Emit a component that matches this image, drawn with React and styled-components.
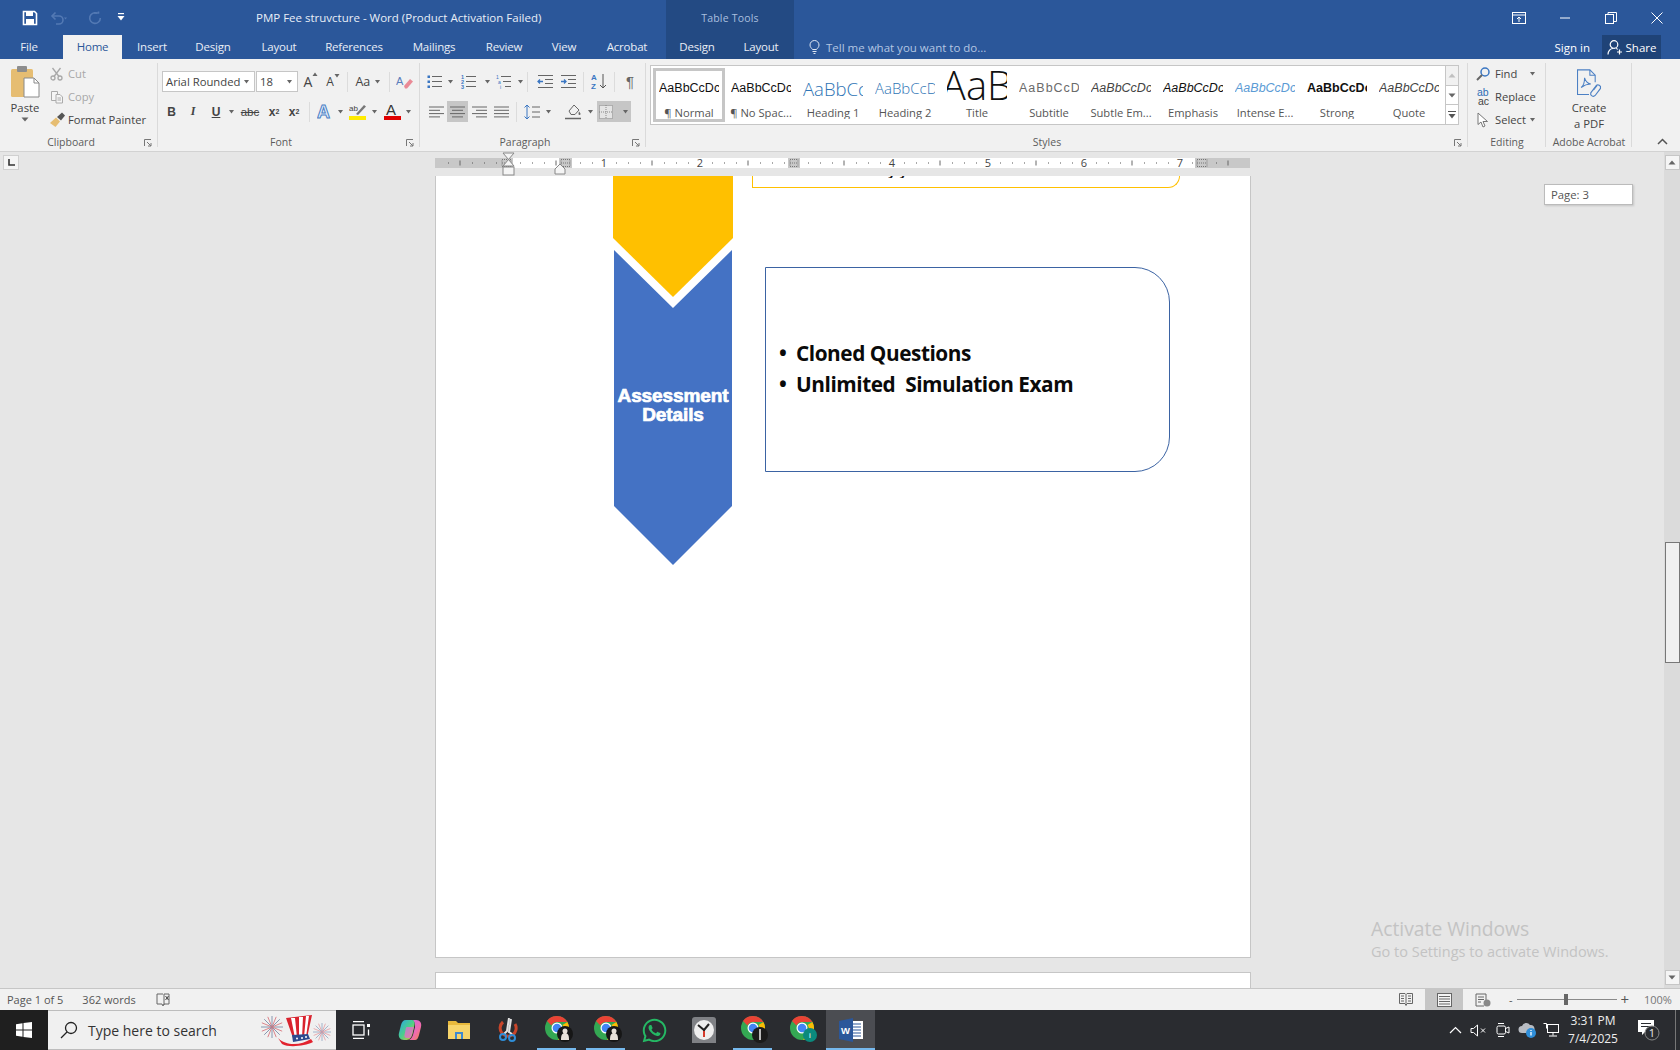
import React from "react";
import styled, { createGlobalStyle } from "styled-components";
import { FaWhatsapp } from "react-icons/fa";

const UI = `"Open Sans", "Noto Sans", sans-serif`;

const Global = createGlobalStyle`
  html, body { margin: 0; padding: 0; height: 100%; overflow: hidden; background: #e6e6e6; }
  #root { height: 100%; }
  * { box-sizing: border-box; }
`;

const Shell = styled.div`
  width: 1680px; height: 1050px; display: flex; flex-direction: column;
  font-family: ${UI}; overflow: hidden; color: #444;
`;

/* ---------- title bar ---------- */
const TitleRow = styled.div`display: flex; height: 35px; background: #2b579a; color: #fff;`;
const TabRow = styled.div`display: flex; height: 24px; background: #2b579a; color: #fff;`;
const Qat = styled.div`width: 256px; display: flex; align-items: center; padding-left: 22px;`;
const QatSlot = styled.span`width: ${p => p.$w}px; display: flex; align-items: center;`;
const WindowTitle = styled.div`width: 410px; font-size: 11.5px; line-height: 35px; white-space: nowrap; color: #e8eef7;`;
const TableBand = styled.div`
  width: 128px; background: #234a83; display: flex; align-items: center; justify-content: center;
  font-size: 10.5px; letter-spacing: .2px; color: #a9bfdf;
`;
const WindowControls = styled.div`margin-left: auto; display: flex; align-items: center;`;
const WinBtn = styled.span`width: 46px; display: flex; justify-content: center;`;

const Tab = styled.div`
  width: ${p => p.$w}px; margin-right: ${p => p.$mr || 0}px; font-size: 11.5px; letter-spacing: -0.2px; line-height: 24px; text-align: center;
  background: ${p => (p.$active ? "#f1f1f1" : "transparent")};
  color: ${p => (p.$active ? "#2b579a" : "#e9eef6")};
`;
const BandTabs = styled.div`width: 128px; background: #234a83; display: flex; margin-left: 6px;`;
const TellMe = styled.div`
  display: flex; align-items: center; gap: 6px; margin-left: 15px; font-size: 11.5px; color: #b4c6e2;
`;
const AccountArea = styled.div`margin-left: auto; display: flex; align-items: center; padding-right: 19px;`;
const SignIn = styled.span`font-size: 11.5px; margin-right: 12px;`;
const Share = styled.div`
  width: 59px; height: 24px; background: #1f4377; display: flex; align-items: center; justify-content: center; gap: 3px; font-size: 11.5px;
`;

/* ---------- ribbon ---------- */
const Ribbon = styled.div`
  display: flex; height: 93px; background: #f1f1f1; border-bottom: 1px solid #d2d2d2; position: relative;
`;
const Group = styled.div`
  width: ${p => p.$w}px; position: relative; display: flex; flex-direction: column;
  &::after { content: ""; position: absolute; right: 0; top: 4px; bottom: 4px; width: 1px; background: #dadada; }
`;
const GroupBody = styled.div`
  flex: 1; display: ${p => (p.$col ? "flex" : "block")}; padding: ${p => p.$pad || "12px 0 0 4px"}; min-height: 0;
`;
const GroupLabel = styled.div`
  height: 19px; text-align: center; font-size: 10.5px; color: #5c5c5c; line-height: 21px; white-space: nowrap; padding-right: ${p => p.$pr || 0}px;
`;
const Launcher = styled.span`position: absolute; right: 6px; bottom: 4px; width: 8px; height: 8px; display: flex;`;
const ToolRow = styled.div`display: flex; align-items: center; height: 21px; margin-bottom: 9px;`;
const Tool = styled.span`
  width: ${p => p.$w || 22}px; height: 21px; flex: none; display: flex; align-items: center; justify-content: center;
  margin-left: ${p => p.$ml || 0}px;
  background: ${p => (p.$on ? "#c6c6c6" : "transparent")};
  font: ${p => p.$font || `11.5px ${UI}`}; color: ${p => p.$color || "#444"};
`;
const Sep = styled.span`width: 1px; height: 20px; background: #dcdcdc; flex: none; margin: 0 ${p => p.$m || 3}px;`;
const Caret = () => <svg width="7" height="4" viewBox="0 0 7 4"><path d="M1 0h5L3.500 3.500z" fill="#666"/></svg>;
const ComboBox = styled.div`
  width: ${p => p.$w}px; height: 21px; margin-right: 1px; background: #fff; border: 1px solid #c6c6c6; flex: none;
  display: flex; align-items: center; justify-content: space-between; padding: 0 4px 0 3px; font-size: 11.3px; color: #444;
`;
const ClipCol = styled.div`width: 48px; display: flex; flex-direction: column; align-items: center; padding-top: 6px; font-size: 11.3px;`;
const ClipLabel = styled.div`margin-top: 1px; margin-bottom: 2px; line-height: 15px; color: #444;`;
const ClipList = styled.div`display: flex; flex-direction: column; padding: 3px 0 0 1px;`;
const ClipItem = styled.div`
  display: flex; align-items: center; gap: ${p => p.$gap || 4}px; height: 23px; font-size: 11.2px; white-space: nowrap;
  color: ${p => (p.$off ? "#a8a8a8" : "#444")};
`;

/* styles gallery */
const StylesBody = styled.div`flex: 1; display: flex; padding: 6px 0 0 4px; min-height: 0;`;
const Gallery = styled.div`
  width: 795px; height: 60px; background: #fff; border: 1px solid #c6c6c6; border-right: 0; padding: 2px 0 0 2px; display: flex;
`;
const StyleItem = styled.div`
  width: 72px; height: 54px; flex: none; display: flex; flex-direction: column; align-items: center; overflow: hidden;
  border: 3px solid ${p => (p.$on ? "#c6c6c6" : "transparent")};
`;
const StylePreview = styled.div`
  width: 60px; height: 34px; flex: none; overflow: hidden; display: flex; white-space: nowrap;
  align-items: ${p => p.$title ? "flex-end" : "center"}; padding-bottom: ${p => p.$title ? 0 : 0}px;
  justify-content: ${p => p.$title ? "center" : "flex-start"};
  font-family: ${p => p.$light ? UI : `"Liberation Sans", sans-serif`};
  font-size: ${p => p.$size || 12.5}px; line-height: ${p => p.$title ? "40px" : "normal"}; color: ${p => p.$color || "#111"};
  font-style: ${p => p.$italic ? "italic" : "normal"}; font-weight: ${p => p.$bold ? 700 : p.$light ? 300 : 400};
  letter-spacing: ${p => p.$ls || 0}px;
`;
const StyleName = styled.div`font-size: 11.2px; color: #555; white-space: nowrap; line-height: 14px; margin-top: 1px;`;
const GalleryScroll = styled.div`width: 14px; height: 60px; display: flex; flex-direction: column; border: 1px solid #c6c6c6; flex: none;`;
const ScrollCell = styled.span`
  flex: 1; display: flex; align-items: center; justify-content: center; background: ${p => p.$off ? "#f1f1f1" : "#fff"};
  & + & { border-top: 1px solid #c6c6c6; }
`;

/* editing */
const EditList = styled.div`flex: 1; display: flex; flex-direction: column; padding: 3px 0 0 6px;`;
const EditItem = styled.div`display: flex; align-items: center; gap: 3px; height: 23px; font-size: 11.2px; white-space: nowrap;`;
const EditIcon = styled.span`width: 18px; display: flex; justify-content: center;`;
const AcroBody = styled.div`flex: 1; display: flex; flex-direction: column; align-items: center; padding-top: 10px; font-size: 11.3px; line-height: 16px; min-height: 0;`;
const AcroCreate = styled.span`margin-top: 1px;`;
const Collapse = styled.div`flex: 1; display: flex; align-items: flex-end; justify-content: flex-end; padding: 0 12px 6px 0;`;

/* ---------- document area ---------- */
const Middle = styled.div`flex: 1; display: flex; min-height: 0; background: #e6e6e6;`;
const DocColumn = styled.div`flex: 1; display: flex; flex-direction: column; min-width: 0; position: relative;`;
const RulerRow = styled.div`height: 24px; display: flex; flex: none; background: #e6e6e6;`;
const TabSelector = styled.div`
  width: 16px; height: 15px; margin: 3px 0 0 3px; background: #f5f5f5; border: 1px solid #d0d0d0; display: flex; align-items: center; justify-content: center;
`;
const RulerWrap = styled.div`margin-left: 416px; width: 815px; height: 24px; flex: none;`;
const Workspace = styled.div`flex: 1; display: flex; min-height: 0; overflow: hidden; padding-left: 435px;`;
const Pages = styled.div`width: 816px; display: flex; flex-direction: column; gap: 14px;`;
const Sheet = styled.div`
  background: #fff; border: 1px solid #c6c6c6; border-top: 0;
  height: ${p => p.$h}px; flex: none; display: flex; padding-left: 177px;
`;
const NextSheet = styled.div`flex: 1; background: #fff; border: 1px solid #c6c6c6; border-bottom: 0;`;
const ChevronStack = styled.div`width: 120px; height: 389px; position: relative; flex: none;`;
const ChevronSvg = styled.svg`display: block;`;
const ChevronLabel = styled.div`
  position: absolute; left: -4px; right: -4px; top: 211px; text-align: center; color: #fff;
  font: 700 19px/18.5px "Liberation Sans", sans-serif; letter-spacing: -0.1px; -webkit-text-stroke: .7px #fff;
`;
const Callouts = styled.div`display: flex; flex-direction: column;`;
const YellowBox = styled.div`
  width: 428px; height: 12px; margin-left: 19px; border: 1px solid #ffc000; border-top: 0;
  border-bottom-right-radius: 30px; position: relative; overflow: hidden;
`;
const ClippedText = styled.div`
  position: absolute; left: 135px; top: 0; height: 2px; font: 700 13px/14px ${UI}; color: #111; letter-spacing: 4px; overflow: hidden;
  display: flex; align-items: flex-end;
`;
const BlueBox = styled.div`
  width: 405px; height: 205px; margin: 79px 0 0 32px; border: 1px solid #3b63a3;
  border-radius: 0 35px 35px 0; display: flex; flex-direction: column; justify-content: center; padding: 0 0 2px 13px;
`;
const BulletLine = styled.div`
  display: flex; align-items: center; font: 700 20.8px/31px ${UI}; color: #0a0a0a; white-space: pre; letter-spacing: -0.45px;
  &::before { content: "•"; width: 17px; flex: none; }
`;
const PageTip = styled.div`
  position: absolute; top: 32px; right: 31px; width: 89px; height: 21px; background: #fff; border: 1px solid #bbb;
  box-shadow: 1px 1px 2px rgba(0,0,0,.15); font-size: 11.3px; line-height: 19px; padding-left: 6px; color: #555;
`;
const Watermark = styled.div`
  position: absolute; left: 1371px; top: 764px; color: #c3c3c3; white-space: nowrap; width: 280px;
  display: flex; flex-direction: column;
`;
const WmTitle = styled.span`font-size: 19.3px; line-height: 26px;`;
const WmSub = styled.span`font-size: 14.5px; line-height: 20px;`;
const ScrollBar = styled.div`
  width: 16px; flex: none; background: #dbdbdb; display: flex; flex-direction: column; align-items: center; padding: 3px 0;
`;
const ScrollBtn = styled.div`
  width: 15px; height: 15px; background: #f5f5f5; border: 1px solid #c6c6c6; display: flex; align-items: center; justify-content: center;
  margin-top: ${p => p.$auto ? "auto" : "0"};
`;
const ScrollThumb = styled.div`
  width: 15px; height: 121px; margin-top: 372px; background: #f0f0f0; border: 1px solid #777;
`;

/* ---------- status bar ---------- */
const StatusBar = styled.div`
  height: 22px; flex: none; background: #f1f1f1; border-top: 1px solid #c6c6c6; display: flex; align-items: center; font-size: 11px; color: #555;
`;
const StatusText = styled.span`margin-left: ${p => p.$ml}px; white-space: nowrap;`;
const StatusIcon = styled.span`margin-left: ${p => p.$ml}px; display: flex;`;
const StatusRight = styled.div`margin-left: auto; display: flex; align-items: center; height: 100%;`;
const ViewBtn = styled.span`
  width: ${p => p.$w || 38}px; height: 100%; display: flex; align-items: center; justify-content: center;
  background: ${p => p.$on ? "#c6c6c6" : "transparent"};
`;
const Zoom = styled.div`width: 124px; display: flex; align-items: center; margin-left: 6px;`;
const ZoomTrack = styled.div`width: 100px; height: 1px; background: #8a8a8a; margin: 0 4px; position: relative;`;
const ZoomThumb = styled.div`position: absolute; left: 47px; top: -5px; width: 4px; height: 11px; background: #666;`;
const ZoomPlus = styled.span`font-size: 15px; line-height: 1;`;
const ZoomPct = styled.span`width: 36px; margin-left: 11px; font-size: 11px; color: #777;`;

/* ---------- taskbar ---------- */
const Taskbar = styled.div`height: 40px; flex: none; background: #2a2c30; display: flex; color: #fff;`;
const StartBtn = styled.div`width: 48px; background: #1f1f1f; display: flex; align-items: center; justify-content: center;`;
const SearchBox = styled.div`
  width: 288px; background: #f0f0f0; border: 1px solid #bdbdbd; border-width: 1px 0 1px 0; display: flex; align-items: center; padding-left: 12px;
`;
const SearchText = styled.span`margin-left: 10px; font-size: 14px; color: #333; white-space: nowrap; width: 172px;`;
const TaskSlot = styled.div`
  width: 49px; height: 40px; flex: none; display: flex; align-items: center; justify-content: center; position: relative;
  background: ${p => p.$active ? "#4b4d52" : "transparent"};
  &::after {
    content: ""; position: absolute; bottom: 0; height: 2px; background: #76b9ed; display: ${p => p.$open ? "block" : "none"};
    left: ${p => p.$active ? 0 : 5}px; right: ${p => p.$active ? 0 : 5}px;
  }
`;
const ChromeSvg = styled.svg`margin-left: 6px;`;
const Tray = styled.div`margin-left: auto; display: flex; align-items: center;`;
const TraySlot = styled.span`width: ${p => p.$w}px; display: flex; justify-content: center; align-items: center;`;
const Clock = styled.div`width: 60px; text-align: center; font-size: 12px; line-height: 18px; color: #eee; margin-right: 2px;`;
const ShowDesktop = styled.div`width: 5px; height: 40px; border-left: 1px solid #777; margin-left: 2px;`;

/* ---------- icons ---------- */
const SaveIcon = () => (
  <svg width="16" height="16" viewBox="0 0 16 16"><path d="M1.500 1.500h11l2 2v11h-13z" fill="none" stroke="#fff" strokeWidth="1.600"/><rect x="4" y="2" width="7" height="4" fill="#fff"/><rect x="4" y="9" width="8" height="5" fill="#fff"/></svg>
);
const UndoIcon = () => (
  <svg width="18" height="14" viewBox="0 0 18 14" fill="none" stroke="#5379b4" strokeWidth="1.600"><path d="M2 5h7a4 4 0 0 1 0 8H6"/><path d="M5.500 1.500 2 5l3.500 3.500"/><path d="M14 6.500h3l-1.500 2z" fill="#5379b4" stroke="none"/></svg>
);
const RedoIcon = () => (
  <svg width="14" height="14" viewBox="0 0 14 14" fill="none" stroke="#5379b4" strokeWidth="1.600"><path d="M9 2.200A5.300 5.300 0 1 0 12.300 7"/><path d="M6 2h4.500V.5"/></svg>
);
const CustomizeIcon = () => (
  <svg width="8" height="9" viewBox="0 0 8 9" fill="#fff"><rect x="1" y="0" width="6" height="1.200"/><path d="M0.500 3h7L4 7.500z"/></svg>
);
const RibbonDisplayIcon = () => (
  <svg width="14" height="12" viewBox="0 0 14 12" fill="none" stroke="#fff"><rect x=".5" y=".5" width="13" height="11"/><path d="M.5 3h13"/><path d="M7 10V5M5 7l2-2 2 2"/></svg>
);
const MinIcon = () => <svg width="12" height="10" viewBox="0 0 12 10"><path d="M1 5h10" stroke="#fff"/></svg>;
const RestoreIcon = () => <svg width="12" height="12" viewBox="0 0 12 12" fill="none" stroke="#fff"><rect x=".5" y="2.500" width="8" height="9"/><path d="M3 2.500v-2h8.500v9h-3"/></svg>;
const CloseIcon = () => <svg width="12" height="12" viewBox="0 0 12 12" stroke="#fff"><path d="M.5.5l11 11M11.500.5l-11 11"/></svg>;
const BulbIcon = () => (
  <svg width="11" height="14" viewBox="0 0 11 14" fill="none" stroke="#dfe7f3"><path d="M3.500 9.500C2.500 8 1 7.200 1 5a4.500 4.500 0 0 1 9 0c0 2.200-1.500 3-2.500 4.500z"/><path d="M3.500 11.500h4M4.500 13.500h2"/></svg>
);
const PersonIcon = () => (
  <svg width="16" height="15" viewBox="0 0 16 15" fill="none" stroke="#fff" strokeWidth="1.200"><circle cx="7" cy="4.500" r="3.800"/><path d="M1 14.500c0-3.500 2.500-6 5-6M9 8.500c.7 .2 1.200 .4 1.800 .9"/><path d="M12.500 9.500v5M10 12h5"/></svg>
);
const LauncherIcon = () => (
  <svg width="8" height="8" viewBox="0 0 8 8" fill="none" stroke="#777"><path d="M.5 7V.5H7"/><path d="M3 3l4 4M4 7h3V4"/></svg>
);
const PasteIcon = () => (
  <svg width="30" height="34" viewBox="0 0 30 34"><rect x="1" y="4" width="22" height="28" rx="1.500" fill="#e6bd72"/><rect x="7" y="1" width="10" height="6" rx="1" fill="#8d8d8d"/><path d="M14 13h10l5 5v14H14z" fill="#fff" stroke="#8a8a8a"/><path d="M24 13v5h5" fill="none" stroke="#8a8a8a"/></svg>
);
const ScissorsIcon = () => (
  <svg width="14" height="14" viewBox="0 0 14 14" fill="none" stroke="#a8a8a8" strokeWidth="1.300"><circle cx="3" cy="11" r="2"/><circle cx="10" cy="11" r="2"/><path d="M4 9.500 10.500 1M9 9.500 2.500 1"/></svg>
);
const CopyIcon = () => (
  <svg width="14" height="14" viewBox="0 0 14 14" fill="#f5f5f5" stroke="#aaa"><path d="M1.500 1.500h6v9h-6z"/><path d="M6 4.500h4l2.500 2.500v6H6z"/><path d="M7.500 8h3.500M7.500 10h3.500"/></svg>
);
const BrushIcon = () => (
  <svg width="16" height="15" viewBox="0 0 16 15"><path d="M0 11 6 5.500l4 4L5.500 15z" fill="#e6bd72"/><path d="M7 5l5-4.500 3 3L11 8.500z" fill="#555"/></svg>
);
const GrowWrap = styled.span`display: flex; align-items: flex-start;`;
const GrowIcon = ({ up }) => (
  <GrowWrap>
    <span>A</span>
    <svg width="6" height="5" viewBox="0 0 6 5"><path d={up ? "M3 .5 5.500 4H.5z" : "M3 4.500 5.500 1H.5z"} fill="#666"/></svg>
  </GrowWrap>
);
const EraserIcon = () => (
  <svg width="18" height="16" viewBox="0 0 18 16"><text x="0" y="11" fontSize="11" fontFamily="Liberation Sans" fill="#5a7dbb">A</text><path d="M8 12l6-7 3 2.500-6 7H9z" fill="#ea8a96"/></svg>
);
const ListIcon = ({ kind }) => {
  const ys = [2.500, 7.500, 12.500];
  const color = "#3a76c2";
  return (
    <svg width="16" height="15" viewBox="0 0 16 15">
      {ys.map((y, i) => (
        <g key={y}>
          {kind === "bullet" && <rect x="0.500" y={y - 1} width="2.500" height="2.500" fill={color}/>}
          {kind === "number" && <text x="0" y={y + 2} fontSize="5.500" fontFamily="Liberation Sans" fontWeight="700" fill={color}>{i + 1}</text>}
          {kind === "multi" && <text x={i * 2} y={y + 2} fontSize="5" fontFamily="Liberation Sans" fill={color}>{"1ai"[i]}</text>}
          <path d={`M${kind === "multi" ? 5 + i * 2 : 5} ${y}H15`} stroke="#666"/>
        </g>
      ))}
    </svg>
  );
};
const IndentIcon = ({ grow }) => (
  <svg width="17" height="13" viewBox="0 0 17 13" fill="none" stroke="#666">
    <path d="M1 .5h15M8 4.500h8M8 8.500h8M1 12.500h15"/>
    <path d={grow ? "M1 6.500h5M4 4.500l2 2-2 2" : "M6 6.500H1M3 4.500l-2 2 2 2"} stroke="#3a76c2" strokeWidth="1.300"/>
  </svg>
);
const SortIcon = () => (
  <svg width="16" height="17" viewBox="0 0 16 17"><text x="0" y="7" fontSize="8" fontWeight="700" fontFamily="Liberation Sans" fill="#3a76c2">A</text><text x="0" y="16" fontSize="8" fontWeight="700" fontFamily="Liberation Sans" fill="#3a76c2">Z</text><path d="M12 1v14M9 12l3 3 3-3" fill="none" stroke="#555"/></svg>
);
const AlignIcon = ({ mode }) => {
  const a = mode === "right" ? 4 : mode === "center" ? 2 : 0;
  const b = mode === "left" ? 11 : mode === "center" ? 13 : 15;
  const rows = [[0, 15], [a, b], [0, 15], [a, b]];
  return <svg width="15" height="12" viewBox="0 0 15 12" stroke="#666">{rows.map((r, i) => <path key={i} d={`M${r[0]} ${1 + i * 3.300}H${r[1]}`}/>)}</svg>;
};
const LineSpaceIcon = () => (
  <svg width="16" height="16" viewBox="0 0 16 16" fill="none"><path d="M3 1v14M.5 3.500 3 1l2.500 2.500M.5 12.500 3 15l2.500-2.500" stroke="#3a76c2"/><path d="M8 3h8M8 8h8M8 13h8" stroke="#666"/></svg>
);
const ShadeIcon = () => (
  <svg width="18" height="17" viewBox="0 0 18 17" fill="none"><path d="M4 8 9 2l5 5-4 4.500H6z" stroke="#666"/><path d="M14 8.500c1 1.200 1.500 2 1.500 2.500a1 1 0 0 1-2 0c0-.5 .2-1.300 .5-2.500z" fill="#666"/><path d="M0 15.500h16" stroke="#666" strokeWidth="1.500"/></svg>
);
const BorderIcon = () => (
  <svg width="14" height="14" viewBox="0 0 14 14" fill="#e4e4e4" stroke="#888" strokeDasharray="1 1"><rect x=".5" y=".5" width="13" height="13"/><path d="M7 0v14M0 7h14"/></svg>
);
const EffectA = () => (
  <svg width="16" height="17" viewBox="0 0 16 17"><text x="0" y="15" fontSize="18" fontWeight="700" fontFamily="Liberation Sans" fill="#e4eefb" stroke="#4b7fc4" strokeWidth="1">A</text></svg>
);
const HighlightIcon = () => (
  <svg width="18" height="17" viewBox="0 0 18 17"><text x="0" y="8" fontSize="8" fontFamily="Liberation Sans" fill="#444">ab</text><path d="M7 11 15 2l2 1.500L9 12z" fill="#777"/><rect x="0" y="13" width="17" height="4" fill="#ffeb00"/></svg>
);
const ColorA = () => (
  <svg width="17" height="17" viewBox="0 0 17 17"><text x="2" y="12" fontSize="15" fontFamily="Liberation Sans" fill="#333">A</text><rect x="0" y="13" width="17" height="4" fill="#e00000"/></svg>
);
const SearchGlass = () => (
  <svg width="14" height="14" viewBox="0 0 14 14" fill="none"><circle cx="9" cy="5" r="4" stroke="#3a76c2" strokeWidth="1.500"/><path d="M6 8 1 13" stroke="#666" strokeWidth="2"/></svg>
);
const ReplaceIcon = () => (
  <svg width="17" height="18" viewBox="0 0 17 18"><text x="2" y="8" fontSize="10.500" fontFamily="Liberation Sans" fill="#2f6db5">ab</text><text x="3" y="17" fontSize="10.500" fontFamily="Liberation Sans" fill="#444">ac</text></svg>
);
const PointerIcon = () => (
  <svg width="12" height="16" viewBox="0 0 12 16"><path d="M1 1v11.500l3-2.500 2 5 2-1-2-4.500h4.500z" fill="#fff" stroke="#777"/></svg>
);
const PdfIcon = () => (
  <svg width="30" height="34" viewBox="0 0 30 34" fill="none" stroke="#4c80c4" strokeWidth="1.200"><path d="M15 29H2V1h14l6 6v8"/><path d="M16 1v6h6"/><path d="M6 21c3-2 4-7 4-11 1 4 3 6 7 7-3 0-7 1-11 4z"/><path d="M17 27l6-8a3 3 0 0 1 5 3l-6 8a3 3 0 0 1-5-3z" strokeWidth="1.300"/><path d="M20 24l4-5"/></svg>
);
const UpChevron = () => <svg width="11" height="7" viewBox="0 0 11 7" fill="none" stroke="#555" strokeWidth="1.500"><path d="M1 6l4.500-4.500L10 6"/></svg>;
const Tri = ({ up, color = "#777" }) => <svg width="8" height="5" viewBox="0 0 8 5"><path d={up ? "M4 .5 7.500 4.500H.5z" : "M.5 .5h7L4 4.500z"} fill={color}/></svg>;
const GalleryMore = () => <svg width="8" height="8" viewBox="0 0 8 8" fill="#555"><rect y="0" width="8" height="1"/><path d="M.5 3h7L4 7.500z"/></svg>;

const RulerMarker = ({ x, w }) => (
  <g>
    <rect x={x} y="6" width={w} height="10" fill="#c8c8c8"/>
    <rect x={x + 2} y="7.500" width={w - 4} height="7" fill="none" stroke="#777" strokeDasharray="1 1"/>
    <path d={`M${x + 2} 11h${w - 4}`} stroke="#777" strokeDasharray="1 1"/>
  </g>
);
const Ruler = () => {
  const ticks = [];
  for (let i = -6; i <= 60; i++) {
    const x = 73 + i * 12;
    if (x < 3 || x > 812 || i % 8 === 0) continue;
    ticks.push(i % 4 === 0
      ? <path key={i} d={`M${x} 8.500v5`} stroke="#666"/>
      : <rect key={i} x={x} y="10.500" width="1" height="1" fill="#555"/>);
  }
  return (
    <svg width="815" height="24" viewBox="0 0 815 24">
      <rect x="0" y="6" width="73" height="10" fill="#c8c8c8"/>
      <rect x="73" y="6" width="742" height="10" fill="#fff"/>
      <rect x="760" y="6" width="55" height="10" fill="#c8c8c8"/>
      {ticks}
      {[[1, 169], [2, 265], [4, 457], [5, 553], [6, 649], [7, 745]].map(([n, x]) => (
        <text key={n} x={x} y="15" textAnchor="middle" fontSize="11" fontFamily="Open Sans" fill="#444">{n}</text>
      ))}
      <RulerMarker x={65} w={13}/><RulerMarker x={124} w={13}/><RulerMarker x={353} w={12}/><RulerMarker x={760} w={14}/>
      <path d="M68 0h11l-5.500 6.500 5.500 6.500H68l5.500-6.500z" fill="#f5f5f5" stroke="#888" transform="translate(0 1)"/>
      <rect x="68" y="15" width="11" height="8" fill="#f5f5f5" stroke="#888"/>
      <path d="M120 22v-5l5-5 5 5v5z" fill="#f5f5f5" stroke="#888"/>
    </svg>
  );
};

const Chevrons = () => (
  <ChevronSvg width="120" height="389" viewBox="0 0 120 389">
    <path d="M0 0H120V62L60 121 0 62Z" fill="#ffc000"/>
    <path d="M1 74 60 132 119 74V330L60 389 1 330Z" fill="#4472c4"/>
  </ChevronSvg>
);

const WinLogo = () => (
  <svg width="16" height="16" viewBox="0 0 16 16" fill="#fff"><path d="M0 2.200 6.500 1.300v6.200H0zM7.500 1.100 16 0v7.500H7.500zM0 8.500h6.500v6.200L0 13.800zM7.500 8.500H16V16l-8.500-1.100z"/></svg>
);
const TaskGlass = () => (
  <svg width="18" height="18" viewBox="0 0 18 18" fill="none" stroke="#222" strokeWidth="1.300"><circle cx="11" cy="7" r="5.500"/><path d="M7 11 1 17"/></svg>
);
const Hat = () => (
  <svg width="72" height="36" viewBox="0 0 72 36">
    {Array.from({ length: 16 }).map((_, i) => {
      const a = (i / 16) * Math.PI * 2;
      return <path key={i} d={`M12 15 L${12 + Math.cos(a) * 11} ${15 + Math.sin(a) * 11}`} stroke={i % 2 ? "#d9787f" : "#7a8ca8"} strokeWidth=".9"/>;
    })}
    {Array.from({ length: 16 }).map((_, i) => {
      const a = (i / 16) * Math.PI * 2;
      return <path key={i} d={`M62 20 L${62 + Math.cos(a) * 9} ${20 + Math.sin(a) * 9}`} stroke={i % 2 ? "#e59aa0" : "#8fa4c2"} strokeWidth=".8"/>;
    })}
    <path d="M26 6 52 3 47 26H33z" fill="#d9232e"/>
    <path d="M31 6h4l2 20h-2zM39 5h4l-1 21h-3zM46 4h3l-3 21h-2z" fill="#fff"/>
    <path d="M32 23 48 22 50 27 33 30z" fill="#2e4a8e"/>
    <path d="M18 26c4 4 10 6 16 6s12-2 17-5l2 3c-8 4-24 6-31 2z" fill="#e2232e"/>
    <circle cx="37" cy="26.500" r="1" fill="#fff"/><circle cx="42" cy="26" r="1" fill="#fff"/><circle cx="46" cy="25" r="1" fill="#fff"/>
  </svg>
);
const TaskView = () => (
  <svg width="18" height="18" viewBox="0 0 18 18" fill="none" stroke="#fff" strokeWidth="1.300"><path d="M1 .5h11M1 17.500h11"/><rect x="1" y="4" width="11" height="10"/><rect x="15" y="3" width="3" height="3" fill="#fff" stroke="none"/><path d="M16.500 8.500v6"/></svg>
);
const Copilot = () => (
  <svg width="24" height="24" viewBox="0 0 24 24">
    <defs>
      <linearGradient id="cpA" x1="0" y1="0" x2="1" y2="1"><stop offset="0" stopColor="#2aa5e8"/><stop offset=".5" stopColor="#4bd08a"/><stop offset="1" stopColor="#f2c230"/></linearGradient>
      <linearGradient id="cpB" x1="0" y1="0" x2="1" y2="1"><stop offset="0" stopColor="#c66ae6"/><stop offset=".6" stopColor="#f06ab0"/><stop offset="1" stopColor="#f28a3a"/></linearGradient>
    </defs>
    <path d="M14 2h4c4 0 6 3 5 7l-2 8c-.8 3-2 5-4 5h-7c2 0 4-2 5-5l2-8c.5-3-1-7-3-7z" fill="url(#cpB)"/>
    <path d="M8 2h6c2 0 3 2 2.500 5l-2 9c-.8 3-3 6-6 6H6c-4 0-6-3-5-7l2-8c.8-3 2-5 5-5z" fill="url(#cpA)"/>
    <path d="M9 9h7l-2 7c-.4 2-1 3-2 4h-3c-2 0-3-1-2.500-3l1-5c.3-2 .5-3 1.500-3z" fill="#e86ad0" opacity=".75"/>
  </svg>
);
const Folder = () => (
  <svg width="22" height="20" viewBox="0 0 22 20"><path d="M0 1h8l2 2h12v16H0z" fill="#e8b93c"/><path d="M0 5h22v14H0z" fill="#f7d56b"/><path d="M7 12h8v7H7z" fill="#3f8ad0"/><path d="M9 14h4v5H9z" fill="#f7d56b"/></svg>
);
const Snip = () => (
  <svg width="20" height="24" viewBox="0 0 20 24" fill="none"><path d="M5 4a8 8 0 1 0 12 2" stroke="#c8452a" strokeWidth="3"/><path d="M11 0 9 13l-3 3M13 1l-2 13 3 2" stroke="#e2e2e2" strokeWidth="2"/><circle cx="5" cy="19" r="3" stroke="#2f8ed8" strokeWidth="2"/><circle cx="14" cy="20" r="3" stroke="#2f8ed8" strokeWidth="2"/></svg>
);
const Chrome = ({ badge }) => (
  <ChromeSvg width="30" height="28" viewBox="0 0 30 28">
    <circle cx="12" cy="12" r="12" fill="#34a853"/>
    <path d="M12 0a12 12 0 0 1 10.400 6H12a6 6 0 0 0-5.500 3.500L2 5A12 12 0 0 1 12 0z" fill="#ea4335"/>
    <path d="M22.400 6A12 12 0 0 1 13 24l4.500-7.500A6 6 0 0 0 17.500 9z" fill="#fbbc05"/>
    <circle cx="12" cy="12" r="5.500" fill="#fff"/><circle cx="12" cy="12" r="4.300" fill="#4285f4"/>
    {badge === "dark" && <g><circle cx="20" cy="18" r="8" fill="#161616"/><path d="M16 24c0-5 1-7 4-7s4 2 4 7z" fill="#e8e2da"/><circle cx="20" cy="15" r="2.500" fill="#e8e2da"/></g>}
    {badge === "night" && <g><circle cx="19" cy="19" r="8" fill="#1b1b1b"/><path d="M18 13h2v11h-2z" fill="#bbb"/></g>}
    {badge === "teal" && <g><circle cx="20" cy="19" r="7" fill="#0b8a7d"/><text x="20" y="22" fontSize="8" textAnchor="middle" fill="#fff" fontFamily="Liberation Sans">i</text></g>}
  </ChromeSvg>
);
const ClockApp = () => (
  <svg width="24" height="26" viewBox="0 0 24 26"><path d="M3 0h18a3 3 0 0 1 3 3v23H0V3a3 3 0 0 1 3-3z" fill="#7f8185"/><circle cx="12" cy="13" r="10" fill="#eeeeee"/><path d="M6 8l6 5 5-6M12 13v7" stroke="#222" strokeWidth="2" fill="none"/><path d="M12 14v6" stroke="#d43b2c" strokeWidth="2"/></svg>
);
const WordIcon = () => (
  <svg width="24" height="24" viewBox="0 0 24 24"><rect x="9" y="3" width="15" height="18" fill="#fff"/><path d="M14 6h8M14 9h8M14 12h8M14 15h8M14 18h8" stroke="#2b579a" strokeWidth="1.200"/><path d="M0 3 14 0v24L0 21z" fill="#2b579a"/><text x="2" y="15.500" fontSize="9.500" fontWeight="700" fontFamily="Liberation Sans" fill="#fff">W</text></svg>
);
const TrayCaret = () => <svg width="13" height="8" viewBox="0 0 13 8" fill="none" stroke="#fff" strokeWidth="1.200"><path d="M1 7l5.500-5.500L12 7"/></svg>;
const Speaker = () => <svg width="16" height="13" viewBox="0 0 16 13" fill="none" stroke="#fff"><path d="M1 4.500h2.500L7.500 1v11L3.500 8.500H1z"/><path d="M11 4.500l4 4M15 4.500l-4 4"/></svg>;
const MeetIcon = () => <svg width="14" height="16" viewBox="0 0 14 16" fill="none" stroke="#fff"><rect x="1" y="4" width="8.500" height="8" rx="1.500"/><path d="M9.500 6.500l3.500-1.500v6l-3.500-1.500M2 1.500h6M2 14.500h6"/></svg>;
const Cloud = () => <svg width="18" height="16" viewBox="0 0 18 16"><path d="M4 11a3.500 3.500 0 0 1 0-7 4.500 4.500 0 0 1 8-1 4 4 0 0 1 1 8z" fill="#b8bcc2"/><circle cx="13" cy="11" r="5" fill="#2f8ed8"/><path d="M13 10v3.500M13 8v1" stroke="#fff" strokeWidth="1.300"/></svg>;
const Network = () => <svg width="16" height="14" viewBox="0 0 16 14" fill="none" stroke="#fff"><rect x="4.500" y="1.500" width="11" height="8"/><path d="M.5 .5h3v5M10 9.500v3M6 13h8"/></svg>;
const Notify = () => (
  <svg width="24" height="22" viewBox="0 0 24 22"><path d="M1 1h16v12H8l-3 3v-3H1z" fill="#fff"/><path d="M4 4.500h10M4 7.500h10" stroke="#2a2c30"/><circle cx="15" cy="14" r="7" fill="#2a2c30" stroke="#888"/><text x="15" y="18" fontSize="11" fontFamily="Open Sans" textAnchor="middle" fill="#eee">1</text></svg>
);
const BookIcon = () => <svg width="14" height="13" viewBox="0 0 14 13" fill="none" stroke="#666"><path d="M.5 .5h5.500l1 1 1-1h5.500v10h-5.500l-1 2-1-2H.5zM7 1.500v9M2 3h3M2 5.500h3M2 8h3M9 3h3M9 5.500h3M9 8h3"/></svg>;
const PrintIcon = () => <svg width="15" height="14" viewBox="0 0 15 14" fill="#f4f4f4" stroke="#666"><rect x=".5" y=".5" width="14" height="13"/><path d="M2 3.500h11M2 6h11M2 8.500h11M2 11h11"/></svg>;
const WebIcon = () => <svg width="16" height="14" viewBox="0 0 16 14" fill="none" stroke="#666"><path d="M9 13H1V1h10v6M3 4h6M3 6.500h6M3 9h3"/><circle cx="12" cy="10" r="3.500" fill="#888" stroke="none"/></svg>;
const ProofIcon = () => <svg width="15" height="14" viewBox="0 0 15 14" fill="none" stroke="#666"><path d="M7 1H1v10h5l1 2 1-2h5V1H8v11"/><path d="M9.500 3l3 4M12.500 3l-3 4" stroke="#444"/></svg>;
const SmallSub = styled.sub`font-size: 7px;`;
const SmallSup = styled.sup`font-size: 7px;`;

const styleItems = [
  { name: "¶ Normal", text: "AaBbCcDc", on: true },
  { name: "¶ No Spac...", text: "AaBbCcDc" },
  { name: "Heading 1", text: "AaBbCc", size: 18.500, color: "#2e74b5", light: true },
  { name: "Heading 2", text: "AaBbCcD", size: 15, color: "#2e74b5", light: true },
  { name: "Title", text: "AaB", size: 40, color: "#111", title: true, light: true },
  { name: "Subtitle", text: "AaBbCcD", color: "#6a6a6a", ls: 1 },
  { name: "Subtle Em...", text: "AaBbCcDc", italic: true, color: "#444" },
  { name: "Emphasis", text: "AaBbCcDc", italic: true },
  { name: "Intense E...", text: "AaBbCcDc", italic: true, color: "#5b9bd5" },
  { name: "Strong", text: "AaBbCcDc", bold: true },
  { name: "Quote", text: "AaBbCcDc", italic: true, color: "#444" },
];

const TaskApps = [
  { el: <TaskView/> }, { el: <Copilot/> }, { el: <Folder/> }, { el: <Snip/> },
  { el: <Chrome badge="dark"/>, open: true }, { el: <Chrome badge="dark"/>, open: true },
  { el: <FaWhatsapp size={27} color="#25b864"/> }, { el: <ClockApp/> },
  { el: <Chrome badge="night"/>, open: true }, { el: <Chrome badge="teal"/> },
  { el: <WordIcon/>, open: true, active: true },
];

export default function App() {
  return (
    <Shell>
      <Global/>
      <TitleRow>
        <Qat>
          <QatSlot $w={28}><SaveIcon/></QatSlot>
          <QatSlot $w={38}><UndoIcon/></QatSlot>
          <QatSlot $w={29}><RedoIcon/></QatSlot>
          <QatSlot $w={12}><CustomizeIcon/></QatSlot>
        </Qat>
        <WindowTitle>PMP Fee struvcture - Word (Product Activation Failed)</WindowTitle>
        <TableBand>Table Tools</TableBand>
        <WindowControls>
          <WinBtn><RibbonDisplayIcon/></WinBtn>
          <WinBtn><MinIcon/></WinBtn>
          <WinBtn><RestoreIcon/></WinBtn>
          <WinBtn><CloseIcon/></WinBtn>
        </WindowControls>
      </TitleRow>
      <TabRow>
        <Tab $w={58} $mr={5}>File</Tab>
        <Tab $w={59} $active>Home</Tab>
        <Tab $w={60}>Insert</Tab>
        <Tab $w={62}>Design</Tab>
        <Tab $w={70}>Layout</Tab>
        <Tab $w={80}>References</Tab>
        <Tab $w={80}>Mailings</Tab>
        <Tab $w={60}>Review</Tab>
        <Tab $w={60}>View</Tab>
        <Tab $w={66}>Acrobat</Tab>
        <BandTabs>
          <Tab $w={62}>Design</Tab>
          <Tab $w={66}>Layout</Tab>
        </BandTabs>
        <TellMe><BulbIcon/>Tell me what you want to do...</TellMe>
        <AccountArea>
          <SignIn>Sign in</SignIn>
          <Share><PersonIcon/>Share</Share>
        </AccountArea>
      </TabRow>

      <Ribbon>
        <Group $w={158}>
          <GroupBody $col $pad="0 0 0 1px">
            <ClipCol>
              <PasteIcon/>
              <ClipLabel>Paste</ClipLabel>
              <Tri color="#666"/>
            </ClipCol>
            <ClipList>
              <ClipItem $off><ScissorsIcon/>Cut</ClipItem>
              <ClipItem $off><CopyIcon/>Copy</ClipItem>
              <ClipItem $gap={2}><BrushIcon/>Format Painter</ClipItem>
            </ClipList>
          </GroupBody>
          <GroupLabel $pr={16}>Clipboard</GroupLabel>
          <Launcher><LauncherIcon/></Launcher>
        </Group>

        <Group $w={262}>
          <GroupBody>
            <ToolRow>
              <ComboBox $w={93}>Arial Rounded<Caret/></ComboBox>
              <ComboBox $w={42}>18<Caret/></ComboBox>
              <Tool $ml={1} $font={`14px ${UI}`}><GrowIcon up/></Tool>
              <Tool $font={`12px ${UI}`}><GrowIcon/></Tool>
              <Sep $m={3}/>
              <Tool $w={34} $font={`12.5px ${UI}`}>Aa&nbsp;<Caret/></Tool>
              <Sep $m={4}/>
              <Tool><EraserIcon/></Tool>
            </ToolRow>
            <ToolRow>
              <Tool $w={19} $font={`700 12px "Liberation Sans"`}>B</Tool>
              <Tool $w={24} $font={`italic 700 12px "Liberation Serif"`}>I</Tool>
              <Tool $font={`700 12px "Liberation Sans"`}><u>U</u></Tool>
              <Tool $w={8}><Caret/></Tool>
              <Tool $w={30} $font={`11.5px "Liberation Sans"`}><s>abc</s></Tool>
              <Tool $w={18} $font={`700 12px "Liberation Sans"`}>x<SmallSub>2</SmallSub></Tool>
              <Tool $font={`700 12px "Liberation Sans"`}>x<SmallSup>2</SmallSup></Tool>
              <Sep $m={4}/>
              <Tool><EffectA/></Tool>
              <Tool $w={8}><Caret/></Tool>
              <Tool $ml={3}><HighlightIcon/></Tool>
              <Tool $w={10}><Caret/></Tool>
              <Tool $ml={2}><ColorA/></Tool>
              <Tool $w={10}><Caret/></Tool>
            </ToolRow>
          </GroupBody>
          <GroupLabel $pr={16}>Font</GroupLabel>
          <Launcher><LauncherIcon/></Launcher>
        </Group>

        <Group $w={226}>
          <GroupBody $pad="12px 0 0 6px">
            <ToolRow>
              <Tool $w={18}><ListIcon kind="bullet"/></Tool>
              <Tool $w={12}><Caret/></Tool>
              <Tool $w={26}><ListIcon kind="number"/></Tool>
              <Tool $w={10}><Caret/></Tool>
              <Tool $w={24}><ListIcon kind="multi"/></Tool>
              <Tool $w={8}><Caret/></Tool>
              <Sep $m={3}/>
              <Tool $ml={3}><IndentIcon/></Tool>
              <Tool $ml={1}><IndentIcon grow/></Tool>
              <Sep $m={4}/>
              <Tool><SortIcon/></Tool>
              <Sep $m={4}/>
              <Tool $font={`15px "Liberation Sans"`} $color="#666">¶</Tool>
            </ToolRow>
            <ToolRow>
              <Tool $w={21}><AlignIcon mode="left"/></Tool>
              <Tool $w={21} $on><AlignIcon mode="center"/></Tool>
              <Tool><AlignIcon mode="right"/></Tool>
              <Tool><AlignIcon mode="justify"/></Tool>
              <Sep $m={4}/>
              <Tool><LineSpaceIcon/></Tool>
              <Tool $w={10}><Caret/></Tool>
              <Tool $ml={10}><ShadeIcon/></Tool>
              <Tool $w={10}><Caret/></Tool>
              <Tool $w={34} $ml={2} $on><BorderIcon/>&nbsp;&nbsp;&nbsp;<Caret/></Tool>
            </ToolRow>
          </GroupBody>
          <GroupLabel $pr={16}>Paragraph</GroupLabel>
          <Launcher><LauncherIcon/></Launcher>
        </Group>

        <Group $w={822}>
          <StylesBody>
            <Gallery>
              {styleItems.map(s => (
                <StyleItem key={s.name} $on={s.on}>
                  <StylePreview $size={s.size} $color={s.color} $italic={s.italic} $bold={s.bold} $ls={s.ls} $title={s.title} $light={s.light}>{s.text}</StylePreview>
                  <StyleName>{s.name}</StyleName>
                </StyleItem>
              ))}
            </Gallery>
            <GalleryScroll>
              <ScrollCell $off><Tri up color="#c0c0c0"/></ScrollCell>
              <ScrollCell><Tri color="#666"/></ScrollCell>
              <ScrollCell><GalleryMore/></ScrollCell>
            </GalleryScroll>
          </StylesBody>
          <GroupLabel $pr={20}>Styles</GroupLabel>
          <Launcher><LauncherIcon/></Launcher>
        </Group>

        <Group $w={78}>
          <EditList>
            <EditItem><EditIcon><SearchGlass/></EditIcon>Find&nbsp;&nbsp;&nbsp;<Caret/></EditItem>
            <EditItem><EditIcon><ReplaceIcon/></EditIcon>Replace</EditItem>
            <EditItem><EditIcon><PointerIcon/></EditIcon>Select<Caret/></EditItem>
          </EditList>
          <GroupLabel>Editing</GroupLabel>
        </Group>

        <Group $w={86}>
          <AcroBody>
            <PdfIcon/>
            <AcroCreate>Create</AcroCreate>
            <span>a PDF</span>
          </AcroBody>
          <GroupLabel>Adobe Acrobat</GroupLabel>
        </Group>

        <Collapse><UpChevron/></Collapse>
      </Ribbon>

      <Middle>
        <DocColumn>
          <RulerRow>
            <TabSelector><svg width="7" height="7" viewBox="0 0 7 7"><path d="M1 0v6h6" fill="none" stroke="#333" strokeWidth="1.600"/></svg></TabSelector>
            <RulerWrap><Ruler/></RulerWrap>
          </RulerRow>
          <Workspace>
            <Pages>
              <Sheet $h={782}>
                <ChevronStack>
                  <Chevrons/>
                  <ChevronLabel>Assessment<br/>Details</ChevronLabel>
                </ChevronStack>
                <Callouts>
                  <YellowBox><ClippedText>yy</ClippedText></YellowBox>
                  <BlueBox>
                    <BulletLine>Cloned Questions</BulletLine>
                    <BulletLine>Unlimited  Simulation Exam</BulletLine>
                  </BlueBox>
                </Callouts>
              </Sheet>
              <NextSheet/>
            </Pages>
          </Workspace>
          <PageTip>Page: 3</PageTip>
          <Watermark>
            <WmTitle>Activate Windows</WmTitle>
            <WmSub>Go to Settings to activate Windows.</WmSub>
          </Watermark>
        </DocColumn>
        <ScrollBar>
          <ScrollBtn><Tri up color="#666"/></ScrollBtn>
          <ScrollThumb/>
          <ScrollBtn $auto><Tri color="#666"/></ScrollBtn>
        </ScrollBar>
      </Middle>

      <StatusBar>
        <StatusText $ml={7}>Page 1 of 5</StatusText>
        <StatusText $ml={19}>362 words</StatusText>
        <StatusIcon $ml={20}><ProofIcon/></StatusIcon>
        <StatusRight>
          <ViewBtn><BookIcon/></ViewBtn>
          <ViewBtn $on><PrintIcon/></ViewBtn>
          <ViewBtn $w={40}><WebIcon/></ViewBtn>
          <Zoom>
            <span>-</span>
            <ZoomTrack><ZoomThumb/></ZoomTrack>
            <ZoomPlus>+</ZoomPlus>
          </Zoom>
          <ZoomPct>100%</ZoomPct>
        </StatusRight>
      </StatusBar>

      <Taskbar>
        <StartBtn><WinLogo/></StartBtn>
        <SearchBox>
          <TaskGlass/>
          <SearchText>Type here to search</SearchText>
          <Hat/>
        </SearchBox>
        {TaskApps.map((a, i) => (
          <TaskSlot key={i} $open={a.open} $active={a.active}>{a.el}</TaskSlot>
        ))}
        <Tray>
          <TraySlot $w={22}><TrayCaret/></TraySlot>
          <TraySlot $w={24}><Speaker/></TraySlot>
          <TraySlot $w={25}><MeetIcon/></TraySlot>
          <TraySlot $w={24}><Cloud/></TraySlot>
          <TraySlot $w={24}><Network/></TraySlot>
          <Clock>3:31 PM<br/>7/4/2025</Clock>
          <TraySlot $w={48}><Notify/></TraySlot>
          <ShowDesktop/>
        </Tray>
      </Taskbar>
    </Shell>
  );
}
